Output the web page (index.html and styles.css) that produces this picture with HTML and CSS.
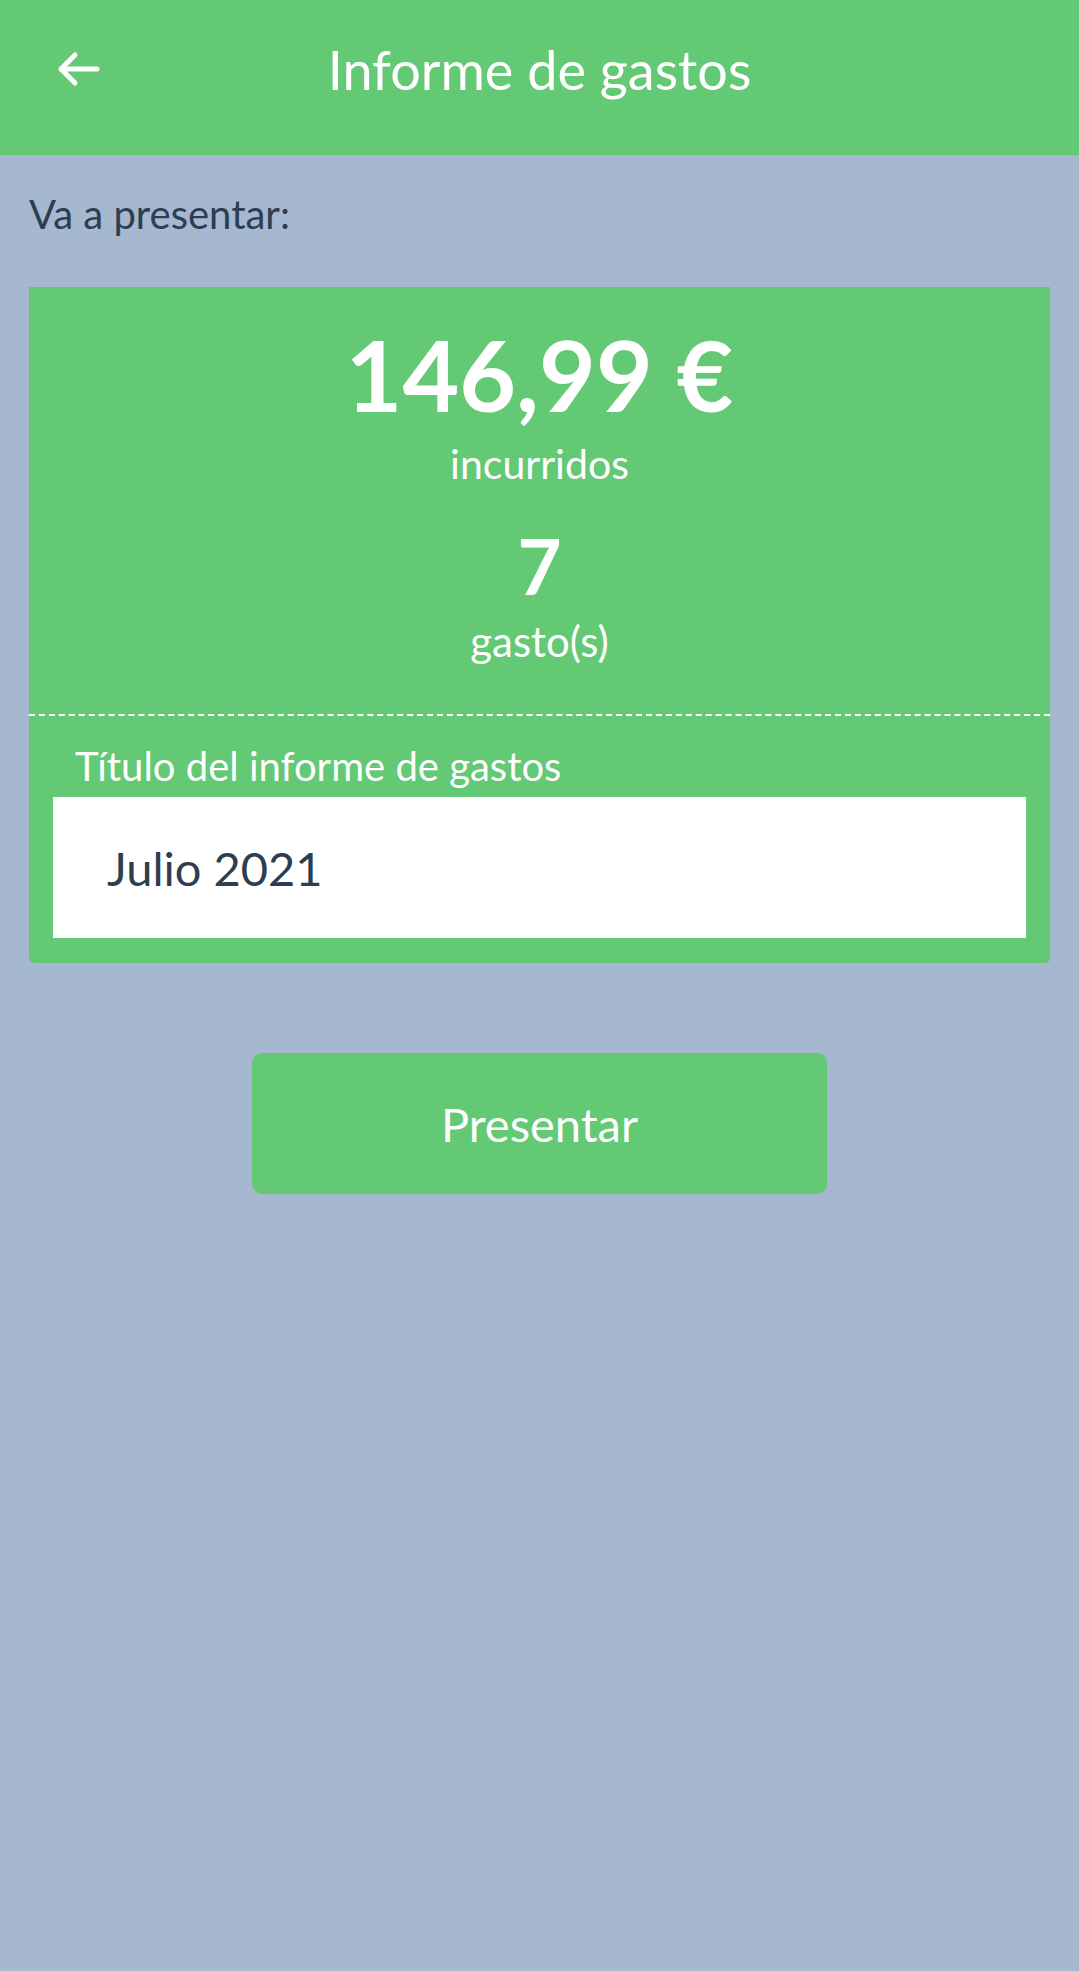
FILE: index.html
```html
<!DOCTYPE html>
<html lang="es">
<head>
    <meta charset="UTF-8">
    <meta name="viewport" content="width=device-width, initial-scale=1.0">
    <title>Informe de gastos</title>
    <link rel="stylesheet" href="styles.css">
</head>
<body>
    <header class="topbar">
        <div class="topbar-row">
            <button class="back-btn" aria-label="Volver">
                <svg width="44" height="38" viewBox="0 0 44 38">
                    <path d="M41 18 H5 M19 4 L5 18 L19 32" fill="none" stroke="#fff" stroke-width="5" stroke-linecap="round" stroke-linejoin="round"/>
                </svg>
            </button>
            <h1 class="topbar-title">Informe de gastos</h1>
        </div>
    </header>

    <main class="content">
        <p class="intro">Va a presentar:</p>

        <section class="summary-card">
            <div class="summary-totals">
                <div class="amount">146,99 €</div>
                <div class="amount-label">incurridos</div>
                <div class="count">7</div>
                <div class="count-label">gasto(s)</div>
            </div>
            <div class="summary-form">
                <label class="field-label" for="report-title">Título del informe de gastos</label>
                <input class="field-input" id="report-title" type="text" value="Julio 2021">
            </div>
        </section>

        <div class="actions">
            <button class="submit-btn">Presentar</button>
        </div>
    </main>
</body>
</html>
```

FILE: styles.css
```css
body {
    margin: 0;
    background-color: #a6b8cf;
    font-family: 'Lato', 'Noto Sans', sans-serif;
    color: #2c3e50;
}
.topbar {
    height: 155px;
    background-color: #63c974;
    color: #fff;
}
.topbar-row {
    position: relative;
    height: 140px;
    display: flex;
    align-items: center;
    justify-content: center;
}
.back-btn {
    position: absolute;
    left: 56px;
    top: 51px;
    padding: 0;
    border: none;
    background: none;
    display: flex;
}
.topbar-title {
    margin: 0;
    font-size: 54px;
    font-weight: 400;
    line-height: 138px;
}
.content {
    padding: 0 29px;
}
.intro {
    margin: 36px 0 0;
    font-size: 40px;
    line-height: 47px;
}
.summary-card {
    margin-top: 49px;
    background-color: #63c974;
    border-radius: 0 0 5px 5px;
    color: #fff;
}
.summary-totals {
    display: flex;
    flex-direction: column;
    align-items: center;
    padding: 37px 0 48px;
}
.amount {
    font-size: 98px;
    font-weight: 700;
    line-height: 100px;
}
.amount-label {
    margin-top: 15px;
    font-size: 41px;
    line-height: 50px;
}
.count {
    margin-top: 37px;
    font-size: 76px;
    font-weight: 700;
    line-height: 80px;
}
.count-label {
    margin-top: 10px;
    font-size: 42px;
    line-height: 50px;
}
.summary-form {
    border-top: 2px dashed #fff;
    padding: 26px 24px 25px;
    display: flex;
    flex-direction: column;
}
.field-label {
    padding-left: 22px;
    font-size: 40px;
    line-height: 48px;
}
.field-input {
    margin-top: 7px;
    height: 141px;
    box-sizing: border-box;
    border: none;
    padding: 0 0 0 54px;
    font-family: inherit;
    font-size: 47px;
    color: #2c3e50;
    background-color: #fff;
    outline: none;
}
.actions {
    display: flex;
    justify-content: center;
    margin-top: 90px;
}
.submit-btn {
    width: 575px;
    height: 141px;
    border: none;
    border-radius: 10px;
    background-color: #63c974;
    color: #fff;
    font-family: inherit;
    font-size: 47px;
}
```
